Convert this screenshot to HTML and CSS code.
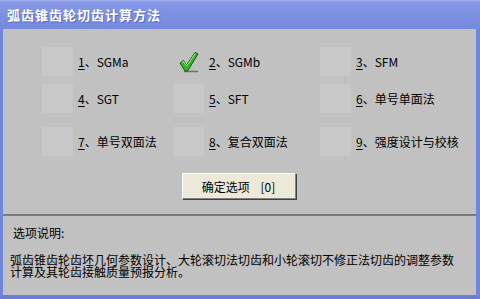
FILE: index.html
```html
<!DOCTYPE html>
<html lang="zh">
<head>
<meta charset="utf-8">
<title>弧齿锥齿轮切齿计算方法</title>
<link rel="stylesheet" href="styles.css">
</head>
<body>
<div class="window">
  <div class="titlebar">弧齿锥齿轮切齿计算方法</div>
  <div class="client">
    <div class="options">
      <div class="opt"><span class="tile"></span><span class="label"><u>1</u>、SGMa</span></div>
      <div class="opt"><span class="tile check">
        <svg width="20" height="22" viewBox="0 0 20 22">
          <path d="M5 20.5 H19" stroke="#6d6d6d" stroke-width="1.5"/>
          <path d="M1 12 L4.5 9.5 L7.5 14 L16 1.5 L19 3 L8.5 20 L6 20 Z" fill="#35b52c" stroke="#155c10" stroke-width="1" stroke-linejoin="round"/>
          <path d="M3 11.5 L4.6 10.6 L7.6 15 L16.2 2.6" fill="none" stroke="#a6f28e" stroke-width="1"/>
        </svg>
      </span><span class="label"><u>2</u>、SGMb</span></div>
      <div class="opt"><span class="tile"></span><span class="label"><u>3</u>、SFM</span></div>
      <div class="opt"><span class="tile"></span><span class="label"><u>4</u>、SGT</span></div>
      <div class="opt"><span class="tile"></span><span class="label"><u>5</u>、SFT</span></div>
      <div class="opt"><span class="tile"></span><span class="label"><u>6</u>、单号单面法</span></div>
      <div class="opt"><span class="tile"></span><span class="label"><u>7</u>、单号双面法</span></div>
      <div class="opt"><span class="tile"></span><span class="label"><u>8</u>、复合双面法</span></div>
      <div class="opt"><span class="tile"></span><span class="label"><u>9</u>、强度设计与校核</span></div>
    </div>
    <div class="actions">
      <button class="btn">确定选项&nbsp;&nbsp;&nbsp;&nbsp;[0]</button>
    </div>
    <div class="separator"></div>
    <div class="desc">
      <p class="desc-title">选项说明:</p>
      <p class="desc-text">弧齿锥齿轮齿坯几何参数设计、大轮滚切法切齿和小轮滚切不修正法切齿的调整参数计算及其轮齿接触质量预报分析。</p>
    </div>
  </div>
</div>
</body>
</html>
```

FILE: styles.css
```css
html, body {
  margin: 0;
  padding: 0;
  width: 480px;
  height: 299px;
  overflow: hidden;
  background: #c1c1c1;
}

.window {
  width: 480px;
  height: 299px;
  display: flex;
  flex-direction: column;
  box-sizing: border-box;
  font-family: "Noto Sans CJK SC", "Liberation Sans", sans-serif;
  font-size: 12px;
  color: #000;
}

.titlebar {
  height: 29px;
  line-height: 29px;
  padding-left: 7px;
  color: #fff;
  font-weight: bold;
  font-size: 13px;
  letter-spacing: 1px;
  background: linear-gradient(to bottom, #a9b6f0 0px, #8799e6 2px, #7d90e2 14px, #7488dd 29px);
  text-shadow: 1px 1px 0 #5a6cc0;
  flex: none;
}

.client {
  flex: 1;
  background: #c1c1c1;
  border-left: 3px solid #7285dc;
  border-right: 4px solid #7285dc;
  border-bottom: 4px solid #6b7ed6;
  display: flex;
  flex-direction: column;
}

.options {
  display: grid;
  grid-template-columns: 131px 147px 1fr;
  grid-template-rows: 37px 43px 29px;
  padding: 18px 0 0 39px;
}

.opt {
  display: flex;
  align-items: flex-start;
}

.tile {
  width: 31px;
  height: 29px;
  background: #c8c8c8;
  flex: none;
  display: flex;
  align-items: center;
  justify-content: center;
}

.tile.check {
  background: transparent;
}

.label {
  height: 29px;
  line-height: 29px;
  margin-left: 5px;
  white-space: nowrap;
}

.label u {
  text-underline-offset: 2px;
}

.actions {
  display: flex;
  justify-content: center;
  margin-top: 17px;
}

.btn {
  width: 114px;
  height: 26px;
  margin-left: -2px;
  padding: 0;
  font-family: inherit;
  font-size: 12px;
  color: #000;
  background: #ece9d8;
  border: 1px solid;
  border-color: #ffffff #808080 #808080 #ffffff;
  box-shadow: 1px 1px 0 #404040;
}

.separator {
  margin-top: 15px;
  height: 2px;
  background: #7a7a7a;
  flex: none;
}

.desc {
  padding: 10px 0 0 7px;
}

.desc p {
  margin: 0;
}

.desc-title {
  line-height: 14px;
  padding-left: 3px;
}

.desc-text {
  margin-top: 14px !important;
  width: 450px;
  line-height: 12px;
  font-size: 12px;
}
```
